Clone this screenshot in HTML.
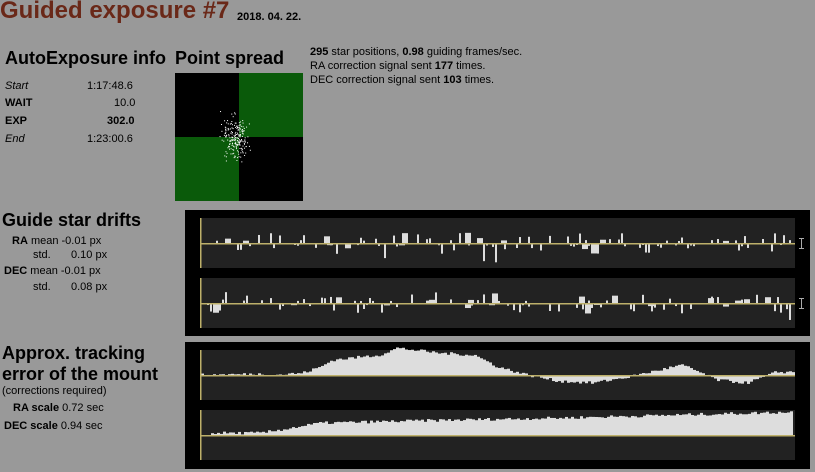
<!DOCTYPE html>
<html><head><meta charset="utf-8"><style>
body{margin:0;width:815px;height:472px;background:#999;font-family:"Liberation Sans",Arial,sans-serif;position:relative;overflow:hidden;color:#000}
.a{position:absolute;white-space:nowrap}
h1{position:absolute;left:0;top:-3px;margin:0;font-size:24px;color:#6a2818;font-weight:bold}
.h{font-size:18px;font-weight:bold}
.s{font-size:11px}
</style></head><body>
<h1>Guided exposure #7</h1>
<div class="a s" style="left:237px;top:11px;font-weight:bold">2018. 04. 22.</div>
<div class="a h" style="left:5px;top:48px">AutoExposure info</div>
<div class="a h" style="left:175px;top:48px">Point spread</div>
<div class="a s" style="left:5px;top:80px;font-style:italic">Start</div><div class="a s" style="left:87px;top:80px">1:17:48.6</div>
<div class="a s" style="left:5px;top:97px;font-weight:bold">WAIT</div><div class="a s" style="left:114px;top:97px">10.0</div>
<div class="a s" style="left:5px;top:115px;font-weight:bold">EXP</div><div class="a s" style="left:107px;top:115px;font-weight:bold">302.0</div>
<div class="a s" style="left:5px;top:133px;font-style:italic">End</div><div class="a s" style="left:87px;top:133px">1:23:00.6</div>
<svg class="a" style="left:175px;top:73px" width="128" height="128" id="ps">
<rect width="128" height="128" fill="#000"/><rect x="64" width="64" height="64" fill="#0a5a0a"/><rect y="64" width="64" height="64" fill="#0a5a0a"/></svg>
<div class="a s" style="left:310px;top:45px;line-height:14px"><b>295</b> star positions, <b>0.98</b> guiding frames/sec.<br>RA correction signal sent <b>177</b> times.<br>DEC correction signal sent <b>103</b> times.</div>
<div class="a h" style="left:2px;top:210px">Guide star drifts</div>
<div class="a s" style="left:12px;top:235px"><b>RA</b> mean -0.01 px</div>
<div class="a s" style="left:33px;top:249px">std.</div><div class="a s" style="left:71px;top:249px">0.10 px</div>
<div class="a s" style="left:4px;top:265px"><b>DEC</b> mean -0.01 px</div>
<div class="a s" style="left:33px;top:281px">std.</div><div class="a s" style="left:71px;top:281px">0.08 px</div>
<div class="a h" style="left:2px;top:343px;line-height:21px">Approx. tracking<br>error of the mount</div>
<div class="a s" style="left:2px;top:385px">(corrections required)</div>
<div class="a s" style="left:13px;top:402px"><b>RA scale</b> 0.72 sec</div>
<div class="a s" style="left:4px;top:420px"><b>DEC scale</b> 0.94 sec</div>
<svg class="a" style="left:185px;top:210px" width="625" height="259" id="ch">
<rect width="625" height="126" fill="#000"/><rect y="132" width="625" height="127" fill="#000"/>
<rect x="15" y="8" width="595" height="50" fill="#222"/><rect x="15" y="68" width="595" height="50" fill="#222"/>
<rect x="15" y="140" width="595" height="50" fill="#222"/><rect x="15" y="200" width="595" height="50" fill="#222"/>
</svg>
<script>
var s=7;function r(){s=(s*16807)%2147483647;return s/2147483647;}
var ns='http://www.w3.org/2000/svg';
function R(p,x,y,w,h,c){var e=document.createElementNS(ns,'rect');e.setAttribute('x',x);e.setAttribute('y',y);e.setAttribute('width',w);e.setAttribute('height',h);e.setAttribute('fill',c);p.appendChild(e);}
var ps=document.getElementById('ps');
for(var i=0;i<200;i++){var g=function(){return (r()+r()+r()-1.5)};R(ps,60+g()*12,64+g()*20,1,1,'#fff');}
var ch=document.getElementById('ch'),W='#ddd',Y='#bdb06a';
function spikes(y0,sc){for(var x=16;x<606;x+=3){if(r()<0.5){var h=(r()-0.5)*2;h=h*Math.abs(h)*sc+(h>0?1:-1)*2;if(r()<0.05)h=h>0?h+6:h-12;var w=r()<0.2?6:2;if(h>0)R(ch,x,y0-h,w,h,W);else R(ch,x,y0,w,-h,W);}}}
spikes(33,9);spikes(93,9);
var P=[[0,0],[0.1,1],[0.12,0],[0.17,2],[0.2,8],[0.22,15],[0.3,20],[0.33,27],[0.4,22],[0.46,20],[0.5,8],[0.55,0],[0.6,-6],[0.66,-8],[0.72,-2],[0.78,6],[0.81,10],[0.84,3],[0.87,-5],[0.92,-8],[0.95,-2],[0.97,3],[1,3]];
function pl(t){for(var i=1;i<P.length;i++){if(t<=P[i][0]){var a=P[i-1],b=P[i];return a[1]+(b[1]-a[1])*(t-a[0])/(b[0]-a[0]);}}return 3;}
for(var x=16;x<608;x+=3){var h=pl((x-16)/592)+(r()-0.5)*3;if(h>0)R(ch,x,165-h,3,h,W);else R(ch,x,165,3,-h,W);}
var Q=[[0,2],[0.1,2],[0.2,12],[0.42,15],[0.6,17],[0.8,20],[1,23]];
for(var x=26;x<608;x+=3){var t=(x-16)/592,h=2;for(var i=1;i<Q.length;i++){if(t<=Q[i][0]){var a=Q[i-1],b=Q[i];h=a[1]+(b[1]-a[1])*(t-a[0])/(b[0]-a[0]);break;}}h+=(r()-0.5)*3;R(ch,x,225-h,3,h,W);}
[33,93,165,225].forEach(function(y){R(ch,15,y,595,1.5,Y);});
[[8,50],[68,50],[140,50],[200,50]].forEach(function(a){R(ch,15,a[0],1.5,a[1],Y);});
[33,93].forEach(function(y){R(ch,616,y-5,1,11,'#aaa');R(ch,614,y-5,5,1,'#aaa');R(ch,614,y+5,5,1,'#aaa');});
</script>
</body></html>
